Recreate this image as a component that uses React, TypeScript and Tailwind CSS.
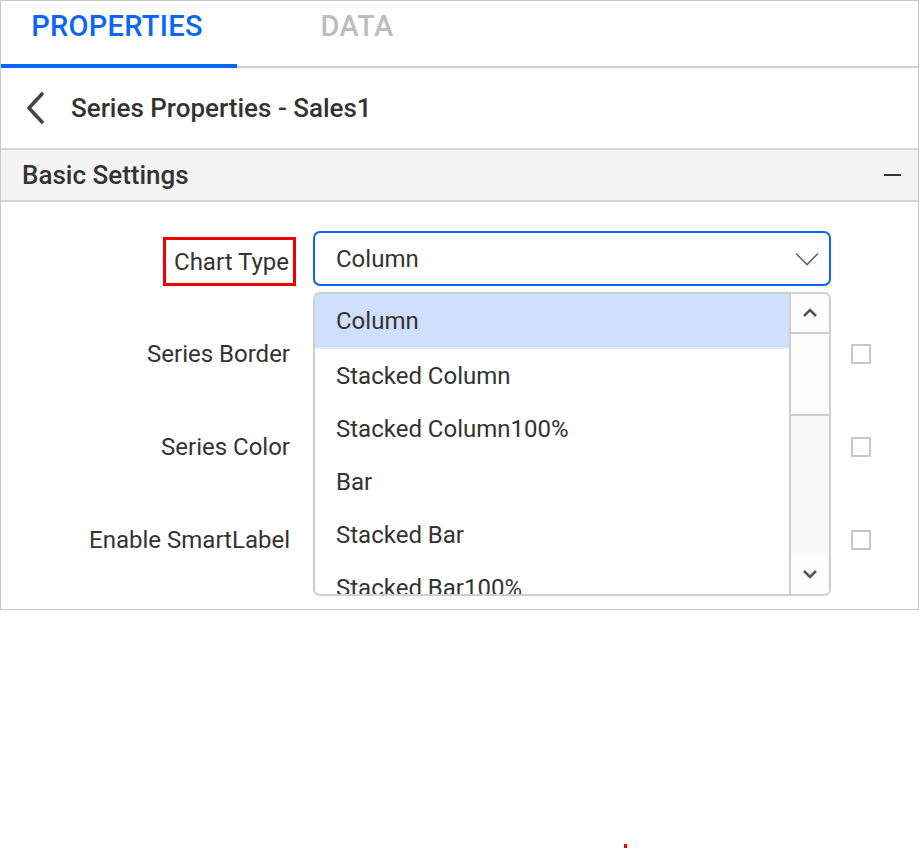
import { ReactNode } from "react";

const font = { fontFamily: "Roboto, 'Noto Sans', sans-serif" };

const chartTypes = ["Column", "Stacked Column", "Stacked Column100%", "Bar", "Stacked Bar", "Stacked Bar100%"];

function Checkbox() {
  return <span className="block h-[20px] w-[20px] border-2 border-[#c8c8c8] bg-white" />;
}

function Row({ label, children }: { label: string; children?: ReactNode }) {
  return (
    <div className="flex h-[40px] items-center">
      <div className="flex w-[295px] justify-end pr-[6px]">{label}</div>
      <div className="ml-[17px] w-[518px]" />
      <div className="ml-[20px]">{children}</div>
    </div>
  );
}

export default function App() {
  return (
    <div className="relative h-[848px] w-[919px] bg-white text-[#333333]" style={font}>
      <div className="relative h-[610px] w-[919px] border border-[#c8c8c8]">
        {/* tabs */}
        <div className="flex h-[67px] border-b-2 border-[#cfcfcf]">
          <div className="relative flex w-[236px] items-center justify-center pb-[14px] pr-[4px] text-[29px] font-medium tracking-[0.3px] text-[#0b66f7]">
            PROPERTIES
            <span className="absolute -bottom-[2px] left-0 h-[4px] w-full bg-[#0b66f7]" />
          </div>
          <div className="flex w-[240px] items-center justify-center pb-[14px] text-[29px] font-medium tracking-[0.3px] text-[#bdbdbd]">
            DATA
          </div>
        </div>

        {/* header */}
        <div className="flex h-[82px] items-center border-b-2 border-[#d4d4d4]">
          <svg width="20" height="32" viewBox="0 0 20 32" className="ml-[24px]">
            <path d="M17 2 L4 16 L17 30" fill="none" stroke="#454545" strokeWidth="3.6" strokeLinecap="round" strokeLinejoin="round" />
          </svg>
          <span className="ml-[26px] text-[26px] font-medium text-[#333333]">Series Properties - Sales1</span>
        </div>

        {/* section */}
        <div className="flex h-[52px] items-center justify-between border-b-2 border-[#d4d4d4] bg-[#f4f4f4] pl-[21px] pr-[17px]">
          <span className="text-[26px] font-medium">Basic Settings</span>
          <span className="block h-[2px] w-[17px] bg-[#333333]" />
        </div>

        {/* form */}
        <div className="relative pt-[29px] text-[24px]">
          <div className="flex h-[55px] items-center">
            <div className="flex w-[295px] justify-end">
              <span className="mt-[6px] flex h-[49px] items-center border-[3px] border-[#f00000] pl-[8px] pr-[4px]">Chart Type</span>
            </div>
            <div className="ml-[17px] flex h-[55px] w-[518px] items-center justify-between rounded-[7px] border-2 border-[#0b66f7] pl-[21px] pr-[10px]">
              <span>Column</span>
              <svg width="24" height="14" viewBox="0 0 24 14">
                <path d="M1 1.5 L12 12.5 L23 1.5" fill="none" stroke="#666666" strokeWidth="1.6" />
              </svg>
            </div>
          </div>
          <div className="mt-[48px] flex flex-col gap-[53px]">
            <Row label="Series Border">
              <Checkbox />
            </Row>
            <Row label="Series Color">
              <Checkbox />
            </Row>
            <Row label="Enable SmartLabel">
              <Checkbox />
            </Row>
          </div>

          {/* popup list */}
          <div className="absolute left-[312px] top-[90px] flex h-[304px] w-[518px] overflow-hidden rounded-[7px] border-2 border-[#cfcfcf] bg-white">
            <div className="flex-1 overflow-hidden">
              {chartTypes.map((t, i) => (
                <div
                  key={t}
                  className={`flex shrink-0 items-center pl-[21px] ${i === 0 ? "h-[55px] border-b-2 border-[#e1ebfc] bg-[#cfe0fc]" : "h-[53px]"}`}
                >
                  {t}
                </div>
              ))}
            </div>
            <div className="flex w-[40px] flex-col border-l-2 border-[#cfcfcf] bg-[#f9f9f9]">
              <div className="flex h-[40px] items-center justify-center border-b-2 border-[#cfcfcf] bg-[#fdfdfd]">
                <svg width="14" height="10" viewBox="0 0 14 10">
                  <path d="M1 8 L7 2 L13 8" fill="none" stroke="#555555" strokeWidth="2.6" />
                </svg>
              </div>
              <div className="h-[82px] border-b-2 border-[#cfcfcf] bg-[#fcfcfc]" />
              <div className="flex-1" />
              <div className="flex h-[40px] items-center justify-center bg-[#fdfdfd]">
                <svg width="14" height="10" viewBox="0 0 14 10">
                  <path d="M1 2 L7 8 L13 2" fill="none" stroke="#555555" strokeWidth="2.6" />
                </svg>
              </div>
            </div>
          </div>
        </div>
      </div>
      <span className="absolute left-[624px] top-[844px] block h-[4px] w-[3px] bg-[#ff0000]" />
    </div>
  );
}
